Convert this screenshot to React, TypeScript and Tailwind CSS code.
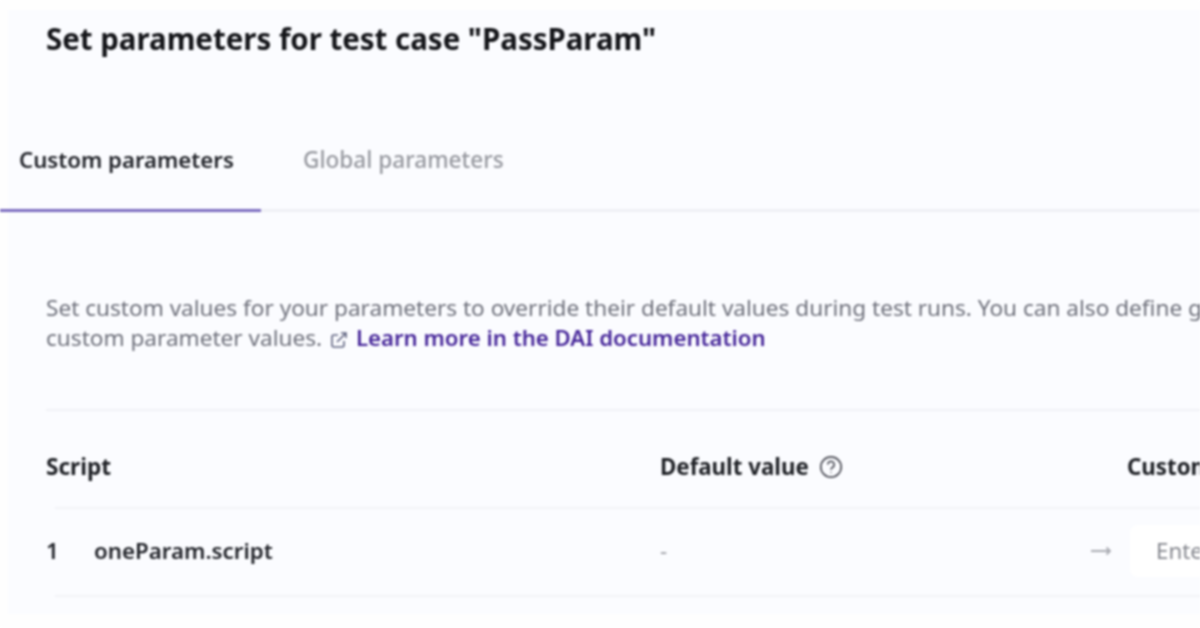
import React from "react";

function ExternalIcon() {
  return (
    <svg width="22" height="20" viewBox="0 0 22 20" fill="none" stroke="#5f6380" strokeWidth="1.6" className="inline-block shrink-0" aria-hidden="true">
      <path d="M10 5H6A2 2 0 0 0 4 7v8a2 2 0 0 0 2 2h8a2 2 0 0 0 2-2v-4" />
      <path d="M9 12l9-9M13 3h5v5" />
    </svg>
  );
}

function HelpIcon() {
  return (
    <svg width="24" height="24" viewBox="0 0 24 24" fill="none" stroke="#4c4d56" strokeWidth="1.7" aria-hidden="true">
      <circle cx="12" cy="12" r="10.2" />
      <path d="M8.8 9.6a3.2 3.2 0 1 1 4.9 2.7c-1 .6-1.7 1.2-1.7 2.4" />
      <path d="M12 17v.8" />
    </svg>
  );
}

export default function App() {
  return (
    <div className="h-[628px] w-[1200px] overflow-hidden bg-[#fefefe] pt-[10px] pl-[8px] font-['Noto_Sans','Open_Sans',sans-serif] blur-[0.9px]">
      <div className="h-[604px] w-[1600px] bg-[#fbfcff] pt-[11px]">
        <h1 className="pl-[38px] text-[29.45px] leading-[36px] font-bold whitespace-nowrap text-[#141519]">
          Set parameters for test case "PassParam"
        </h1>

        <div className="mt-[81px] -ml-[8px] flex h-[74px] border-b-[3px] border-[#eff0f5]">
          <div className="-mb-[3px] flex w-[261px] items-start border-b-[3px] border-[#7b6cc0] pt-[6px] pl-[19px]">
            <span className="text-[22.2px] leading-[32px] font-semibold whitespace-nowrap text-[#22242a]">Custom parameters</span>
          </div>
          <div className="pt-[6px] pl-[42px]">
            <span className="text-[22.6px] leading-[32px] font-medium whitespace-nowrap text-[#96989f]">Global parameters</span>
          </div>
        </div>

        <div className="pr-[46px] pl-[38px]">
          <p className="mt-[81px] text-[22.6px] leading-[30px] whitespace-nowrap text-[#6e707b]">
            Set custom values for your parameters to override their default values during test runs. You can also define global parameters to use as
            <br />
            custom parameter values. <ExternalIcon />{" "}
            <a className="text-[22.2px] font-semibold text-[#47279a]">Learn more in the DAI documentation</a>
          </p>

          <div className="mt-[56px] border-t-2 border-[#f0f1f6]" />

          <div className="grid h-[96px] grid-cols-[614px_467px_1fr] items-center pt-[16px] text-[22.3px] font-bold text-[#1e2025]">
            <span className="text-[22.6px]">Script</span>
            <span className="flex items-center gap-[10px]">Default value <HelpIcon /></span>
            <span>Custom value</span>
          </div>

          <div className="ml-[9px] border-t-2 border-[#f2f3f7]" />

          <div className="grid h-[86px] grid-cols-[614px_430px_1fr] items-center pb-[2px] text-[22.3px]">
            <div className="flex font-semibold text-[#22242a]">
              <span className="w-[48px]">1</span>
              <span>oneParam.script</span>
            </div>
            <span className="text-[#9a9ca3]">-</span>
            <div className="flex items-center gap-[18px]">
              <svg width="22" height="12" viewBox="0 0 22 12" fill="none" stroke="#a9abb2" strokeWidth="1.8" aria-hidden="true">
                <path d="M1 6h19M16.5 2.5 20 6l-3.5 3.5" />
              </svg>
              <div className="flex h-[52px] w-[300px] items-center rounded-lg bg-white pl-[26px] text-[#85878e]">Enter value</div>
            </div>
          </div>

          <div className="ml-[9px] border-t-2 border-[#f2f3f7]" />
        </div>
      </div>
    </div>
  );
}
